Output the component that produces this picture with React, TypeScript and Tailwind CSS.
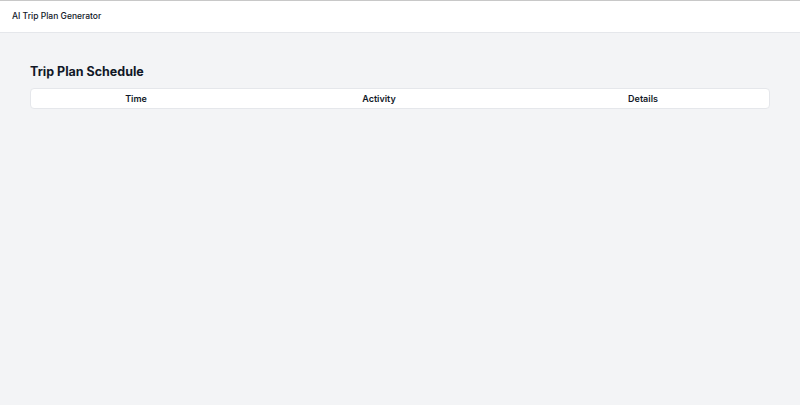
export default function App() {
  return (
    <div className="min-h-[405px] w-[800px] bg-[#f3f4f6] font-['Inter',sans-serif] text-[#111827] border-t border-[#c8c8c8]">
      <header className="h-[32px] bg-white border-b border-[#e5e7eb] flex items-center px-3">
        <h1 className="text-[8.5px] font-medium">AI Trip Plan Generator</h1>
      </header>
      <main className="px-[30px] pt-[30px]">
        <h2 className="text-[12.5px] font-bold leading-[18px] mb-[7px]">Trip Plan Schedule</h2>
        <div className="bg-white border border-[#e5e7eb] rounded-sm grid grid-cols-[210px_276px_1fr] h-[21px] items-center text-[9px] font-semibold text-center">
          <div>Time</div>
          <div>Activity</div>
          <div>Details</div>
        </div>
      </main>
    </div>
  )
}
